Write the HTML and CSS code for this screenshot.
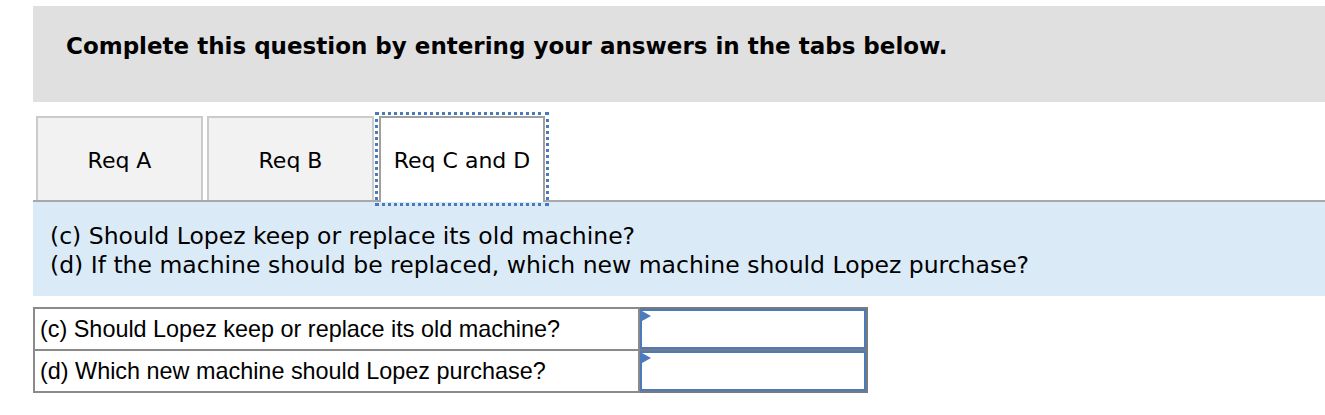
FILE: index.html
```html
<!DOCTYPE html>
<html>
<head>
<meta charset="utf-8">
<link rel="stylesheet" href="styles.css">
</head>
<body>
<div class="page">
  <div class="header">
    <h1 class="header-title">Complete this question by entering your answers in the tabs below.</h1>
  </div>
  <div class="tabs">
    <div class="tab">Req A</div>
    <div class="tab">Req B</div>
    <div class="tab tab-active">Req C and D</div>
  </div>
  <div class="prompt">
    <p class="prompt-line">(c) Should Lopez keep or replace its old machine?</p>
    <p class="prompt-line">(d) If the machine should be replaced, which new machine should Lopez purchase?</p>
  </div>
  <table class="answers">
    <tr>
      <td class="label-cell">(c) Should Lopez keep or replace its old machine?</td>
      <td class="input-cell"><div class="input-box"><span class="marker"></span></div></td>
    </tr>
    <tr>
      <td class="label-cell">(d) Which new machine should Lopez purchase?</td>
      <td class="input-cell"><div class="input-box"><span class="marker"></span></div></td>
    </tr>
  </table>
</div>
</body>
</html>
```
FILE: styles.css
```css
html, body {
  margin: 0;
  padding: 0;
  background: #ffffff;
}
body {
  font-family: "DejaVu Sans", Verdana, sans-serif;
  color: #000;
}
.page {
  padding: 6px 0 0 33px;
}
.header {
  background: #e0e0e0;
  height: 96px;
  box-sizing: border-box;
  padding: 26px 0 0 33px;
}
.header-title {
  margin: 0;
  font-size: 23px;
  font-weight: bold;
  line-height: 28px;
}
.tabs {
  display: flex;
  align-items: flex-end;
  margin-top: 14px;
  padding-left: 3px;
  border-bottom: 2px solid #a9a9a9;
  height: 84px;
}
.tab {
  box-sizing: border-box;
  height: 84px;
  width: 167px;
  margin-right: 4px;
  background: #f2f2f2;
  border: 2px solid #cbcbcb;
  border-bottom: none;
  display: flex;
  align-items: center;
  justify-content: center;
  font-size: 22px;
  padding-top: 2px;
}
.tab-active {
  width: 166px;
  margin-left: 1px;
  background: #ffffff;
  border: 2px solid #a0a0a0;
  border-bottom: none;
  outline: 3px dotted #4a7ab9;
  outline-offset: 1px;
  height: 86px;
  margin-bottom: -2px;
  padding-top: 0;
}
.prompt {
  background: #dbeaf7;
  height: 94px;
  box-sizing: border-box;
  padding: 20px 0 0 17px;
}
.prompt-line {
  margin: 0;
  font-size: 23.5px;
  line-height: 29px;
}
.answers {
  margin-top: 11px;
  border-collapse: collapse;
  font-family: "Liberation Sans", Arial, sans-serif;
  font-size: 23.4px;
}
.answers td {
  border: 2px solid #8a8a8a;
  height: 40px;
  padding: 0;
}
.label-cell {
  width: 598px;
  padding-left: 5px !important;
}
.input-cell {
  width: 226px;
  border-color: #7a7a7a !important;
  padding: 0 !important;
}
.input-box {
  position: relative;
  box-sizing: border-box;
  height: 40px;
  border: 2px solid #4b7bbd;
  margin: 0;
}
.marker {
  position: absolute;
  left: 0;
  top: 0;
  width: 0;
  height: 0;
  border-top: 5px solid transparent;
  border-bottom: 5px solid transparent;
  border-left: 9px solid #4b7bbd;
}
```
